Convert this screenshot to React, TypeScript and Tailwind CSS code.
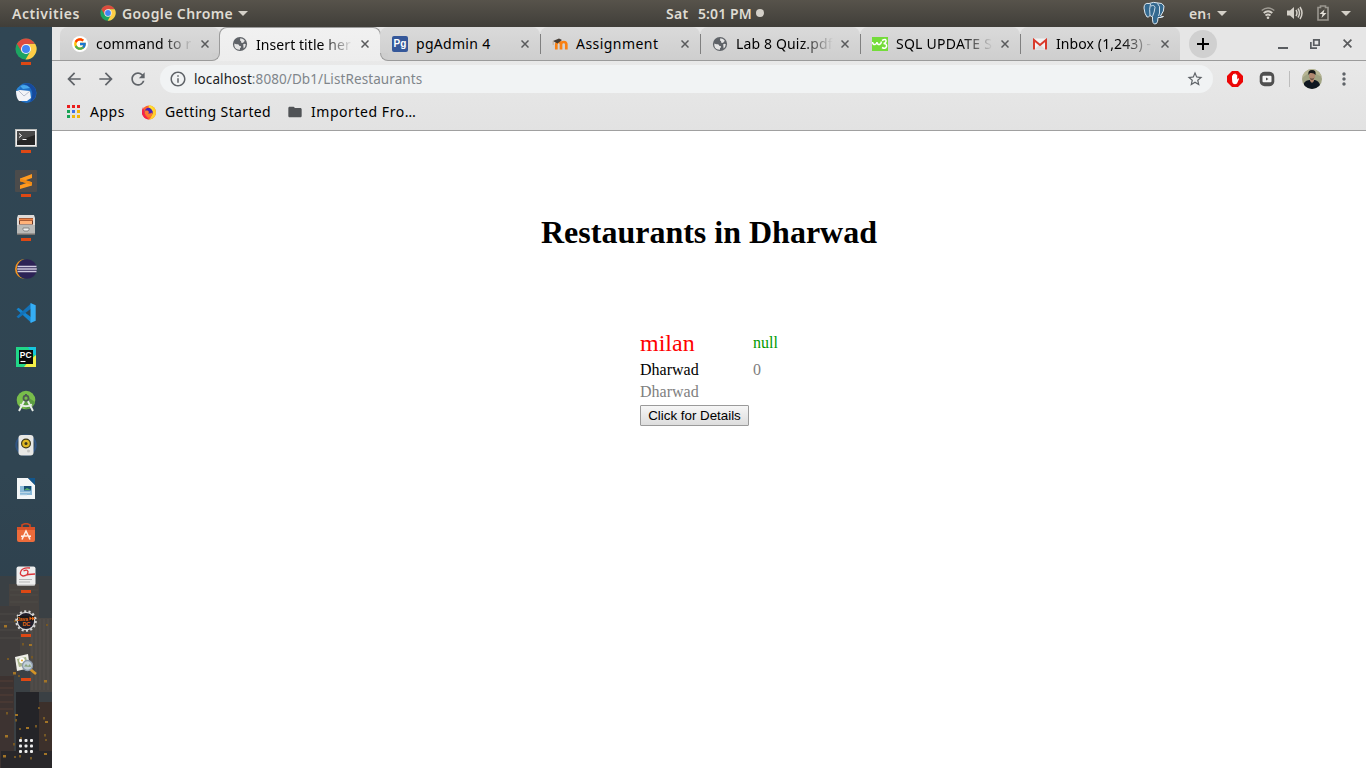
import React from "react";
import {
  MdArrowBack,
  MdArrowForward,
  MdRefresh,
  MdStarBorder,
  MdMoreVert,
  MdFolder,
  MdInfoOutline,
} from "react-icons/md";
import { FcGoogle } from "react-icons/fc";

type IconProps = { className?: string };

function ChromeIcon({ className }: IconProps) {
  return (
    <svg viewBox="0 0 48 48" className={className}>
      <circle cx="24" cy="24" r="23" fill="#1da462" />
      <path d="M24 24 L4.1 12.5 A23 23 0 0 1 43.9 12.5 L24 13 Z" fill="#dd4b3e" />
      <path d="M24 13 H44.2 A23 23 0 0 1 23 47 L33.5 29.5 Z" fill="#ffcd46" />
      <path d="M4.1 12.5 L14.4 30 L24 24 L24 13 Z" fill="#dd4b3e" />
      <circle cx="24" cy="24" r="11" fill="#f4f4f4" />
      <circle cx="24" cy="24" r="8.7" fill="#4285f4" />
    </svg>
  );
}

function GlobeIcon() {
  return (
    <svg viewBox="0 0 16 16" className="size-4">
      <circle cx="8" cy="8" r="7.1" fill="#5f6368" />
      <path d="M2.300 7.600Q4 8.600 5.800 8.200Q7.300 8.400 7.200 9.800L9 10.200Q9.200 11.600 8 12.200V13.800Q3 13.800 2.300 9.500Z" fill="#e4e4e4" />
      <path d="M8.300 2.300Q11.500 2.300 13 5Q11.800 5.300 11.500 6.500Q10 7.500 9 6.300Q9.800 5 8 4.600Z" fill="#e4e4e4" />
      <path d="M11.200 8.300Q12.600 7.400 13.800 8.200Q13.600 11 11.600 12.500Z" fill="#e4e4e4" />
    </svg>
  );
}

function ElephantIcon() {
  return (
    <svg viewBox="0 0 22 24" className="h-6 w-[22px]" stroke="#dfe9f0" strokeWidth="1" strokeLinejoin="round">
      <path d="M6 2.500Q1 1.500 1 7Q1.500 13 4 16Q5.500 16.500 7 14.500L9.500 16Q9.300 19 10 21.500Q11 24 13.500 22.500Q15 21 15 16.500Q19 17 20.500 15.500Q18.500 15.800 17.500 15Q21.500 10 21 5Q19.500 1.500 15 2Q10.500 .5 6 2.500Z" fill="#34698f" />
      <path d="M7.500 3Q6 8 7 14.500M14.500 2.500Q17.500 5.500 16.500 9Q17 12 15.500 15M8 5Q11.500 3.500 12 6.500Q11.500 11 9.500 15.500" fill="none" strokeWidth=".9" />
    </svg>
  );
}

function ThunderbirdIcon() {
  return (
    <svg viewBox="0 0 22 22" className="size-[22px]">
      <circle cx="11.5" cy="11" r="10" fill="#1f6fc4" />
      <path d="M8 2 Q18 -1 21 9 Q22 17 15 20 Q19 13 16 7 Q13 3 8 2Z" fill="#174a9c" />
      <path d="M5 4 Q11 1 15 6 L8 7Z" fill="#48a7ea" />
      <path d="M1 9 L5 8 L15 9 L16 16 L12 19 L4 19 Q1 16 1 9Z" fill="#f3f3f7" />
      <path d="M4 9 L9 14 L15 9" fill="none" stroke="#b8bdcc" />
      <path d="M1 9 Q2 5 6 4 L4 8Z" fill="#2b86d6" />
    </svg>
  );
}

function TerminalIcon() {
  return (
    <svg viewBox="0 0 22 18" className="mt-0.5 w-[22px] h-[18px]">
      <rect width="22" height="18" fill="#b9bbb9" />
      <rect x="1" y="1" width="20" height="16" fill="#eee" />
      <rect x="2" y="2" width="18" height="14" fill="#252525" />
      <path d="M2 2H20V6L2 12Z" fill="#484848" />
      <path d="M4 4.500L6.500 6.500L4 8.500M7.500 10.500H11.500" stroke="#fff" fill="none" />
    </svg>
  );
}

function SublimeIcon() {
  return (
    <svg viewBox="0 0 22 22" className="size-[22px]">
      <rect width="22" height="22" rx="1" fill="#4b4b4b" />
      <path d="M5 8.500L17 4V8L10.500 10.300L17 12.200V15.500L5 19V15.200L11.500 13L5 11.200Z" fill="#ff9a1f" />
      <path d="M5 8.500L5 11.200L17 15V12.200Z" fill="#f08a14" />
    </svg>
  );
}

function FilesIcon() {
  return (
    <svg viewBox="0 0 18 20" className="w-[18px] h-5">
      <path d="M1 0H17L18 3V19H0V3Z" fill="#dedbd8" />
      <rect x="2" y="3" width="14" height="6.500" fill="#6b3927" />
      <rect x="2" y="3.500" width="14" height="2" fill="#ea8044" />
      <rect x="3" y="6" width="12" height="3" fill="#ffb27a" />
      <rect x="0" y="10" width="18" height="9" fill="#b9b9b7" />
      <path d="M6 13H12V14.500L11 16H7L6 14.500Z" fill="#eee" stroke="#777" strokeWidth=".8" />
      <rect x="0" y="18.500" width="18" height="1.500" fill="#74716e" />
    </svg>
  );
}

function EclipseIcon() {
  return (
    <svg viewBox="0 0 22 20" className="w-[22px] h-5">
      <circle cx="10" cy="10" r="10" fill="#f7941e" />
      <circle cx="12" cy="10" r="10.300" fill="#304552" />
      <circle cx="12" cy="10" r="9.800" fill="#2c2255" />
      <path d="M2.500 7.500H21.500M2.200 10H21.800M2.500 12.500H21.500" stroke="#cfcbe0" strokeWidth="1.500" />
    </svg>
  );
}

function VsCodeIcon() {
  return (
    <svg viewBox="0 0 20 20" className="size-5">
      <path d="M0.500 6.200L2.500 4.800L15.500 14.600V20Z" fill="#1585cf" />
      <path d="M0.500 13.800L2.500 15.200L15.500 5.200V0Z" fill="#1372b8" />
      <path d="M14.500 0L19.700 2.300V17.700L14.500 20Z" fill="#35aef5" />
    </svg>
  );
}

function PyCharmIcon() {
  return (
    <svg viewBox="0 0 20 20" className="size-5">
      <rect width="20" height="20" fill="#21d789" />
      <path d="M12 0H20V9L15 5Z" fill="#16c6df" />
      <path d="M20 8V20H8L13 14Z" fill="#f5f047" />
      <rect x="3" y="3" width="14" height="14" fill="#0b0b0b" />
      <text x="3.800" y="10.800" fontSize="8.400" fontWeight="700" fill="#fff" fontFamily="Liberation Sans, sans-serif">
        PC
      </text>
      <path d="M4.500 14.500H9.500" stroke="#fff" strokeWidth="1.100" />
    </svg>
  );
}

function AndroidStudioIcon() {
  return (
    <svg viewBox="0 0 20 22" className="w-5 h-[22px]">
      <circle cx="10" cy="10" r="9.300" fill="#78bd4b" />
      <path d="M10 6L19 12Q16 19 10 19.300L6 14Z" fill="#5a9c42" />
      <path d="M9.200 9L3 21M10.800 9L17 21M4 14.500Q10 18 16 14.500" stroke="#e8eee8" strokeWidth="1.900" fill="none" />
      <path d="M10 4V7" stroke="#4d5b54" strokeWidth="2" />
      <circle cx="10" cy="8.200" r="2.500" fill="#78bd4b" stroke="#4d5b54" strokeWidth="1.800" />
    </svg>
  );
}

function RhythmboxIcon() {
  return (
    <svg viewBox="0 0 22 22" className="size-[22px]">
      <circle cx="11" cy="11" r="9.700" fill="none" stroke="#305482" strokeWidth="2" />
      <rect x="3.500" y="1" width="15" height="20.500" rx="3" fill="#e8e8e5" />
      <circle cx="11" cy="9.500" r="5" fill="#3e391c" />
      <circle cx="11" cy="9.500" r="3.800" fill="#dfb722" />
      <circle cx="11" cy="9.500" r="1.500" fill="#3b361e" />
      <circle cx="13.500" cy="17" r="1.500" fill="#c5c5c2" />
    </svg>
  );
}

function WriterIcon() {
  return (
    <svg viewBox="0 0 18 22" className="w-[18px] h-[22px]">
      <path d="M0 0H11L18 7V21H0Z" fill="#f3f6f7" />
      <path d="M11 0H18V7Z" fill="#12568c" />
      <rect x="3" y="8" width="12" height="9" fill="#8ab9d8" />
      <rect x="7" y="8" width="7" height="4.500" fill="#164d72" />
      <path d="M7 12L10 10L14 12Z" fill="#55ad67" />
      <path d="M3 14.500H13M3 17H10" stroke="#c8dce9" strokeWidth=".8" />
    </svg>
  );
}

function SoftwareIcon() {
  return (
    <svg viewBox="0 0 18 20" className="w-[18px] h-5">
      <path d="M5 5V2Q9 -.5 13 2V5" stroke="#c74721" strokeWidth="1.700" fill="none" />
      <path d="M0 4H18V17Q18 19 16 19H2Q0 19 0 17Z" fill="#ed6c3b" />
      <path d="M0 4H18V7H0Z" fill="#d85128" />
      <path d="M5 16.500L9 8L13 16.500M6.500 13H10.500" stroke="#fff0e6" strokeWidth="1.500" fill="none" />
      <circle cx="5" cy="13.300" r="1" fill="#fff" />
      <circle cx="13" cy="13.300" r="1" fill="#fff" />
    </svg>
  );
}

function DocumentViewerIcon() {
  return (
    <svg viewBox="0 0 20 20" className="-mt-0.5 size-5">
      <rect x=".5" y=".5" width="19" height="19" rx="2" fill="#eee" />
      <path d="M14 2Q7 1 5 5Q3 9 7 10Q12 10 12 5.500Q11 3 7.500 5M7 10Q12 8 19 8" stroke="#da3439" strokeWidth="1.300" fill="none" />
      <path d="M3 13.500H16M3 16H14" stroke="#b5b5b5" />
      <path d="M1 19H19" stroke="#c0c0c0" />
    </svg>
  );
}

function JavaEditorIcon() {
  return (
    <svg viewBox="0 0 22 22" className="size-[22px]">
      <circle cx="11" cy="11" r="8.700" fill="#201f2b" stroke="#d7d7d7" strokeWidth="1.200" />
      <circle cx="11" cy="11" r="9.800" fill="none" stroke="#d7d7d7" strokeWidth="2" strokeDasharray="2.100 2.300" />
      <rect x="3" y="6" width="16" height="5" fill="#191819" />
      <text x="2" y="10.500" fontSize="5" fontWeight="700" fill="#ea6a14" fontFamily="Liberation Sans, sans-serif">
        Java
      </text>
      <path d="M14.500 6.500L17 8.500L14.500 10.500ZM17 6.500L20 8.500L17 10.500Z" fill="#ea6a14" />
      <text x="7.400" y="16.300" fontSize="5.500" fontWeight="700" fill="#ea6a14" fontFamily="Liberation Sans, sans-serif">
        DC
      </text>
    </svg>
  );
}

function ImageViewerIcon() {
  return (
    <svg viewBox="0 0 22 22" className="size-[22px]">
      <path d="M0 3L13 0L15 14L2 17Z" fill="#eeeee7" />
      <path d="M2 5L11 3L13 11L4 13Z" fill="#a9b58a" />
      <circle cx="7" cy="6.500" r="2.800" fill="#fff" />
      <circle cx="7" cy="6.500" r="1.100" fill="#eab13a" />
      <path d="M15 15L21 20" stroke="#d59426" strokeWidth="2.600" />
      <circle cx="12.500" cy="11.500" r="5" fill="#c3d0d8" stroke="#8b98a8" strokeWidth="1.300" />
      <path d="M9 12.500L11 10L13 12L15 10L16 13Z" fill="#8aa37e" />
    </svg>
  );
}

function AppGridIcon() {
  return (
    <svg viewBox="0 0 14 14" className="size-3.5" fill="#eee">
      {[0, 5.5, 11].map((y) => [0, 5.5, 11].map((x) => <rect key={x + "-" + y} x={x} y={y} width="3" height="3" rx="1" />))}
    </svg>
  );
}

function Skyline() {
  const lights = [
    [4, 55], [14, 50], [22, 73], [29, 74], [31, 86], [7, 88], [13, 102], [18, 105], [6, 142], [15, 144],
    [15, 149], [19, 158], [5, 165], [20, 167], [13, 173], [26, 157], [35, 155], [38, 137], [44, 110],
    [46, 54], [43, 147], [45, 151], [44, 164], [45, 169], [3, 185], [14, 186], [19, 185], [44, 183], [30, 187],
  ];
  return (
    <svg viewBox="0 0 52 198" className="absolute bottom-0 left-0 w-[52px] h-[198px]">
      <rect width="52" height="192" y="6" fill="#3a4044" />
      <rect y="14" x="9" width="30" height="86" fill="#474340" />
      <rect y="36" width="20" height="70" fill="#403d3c" />
      <rect x="30" y="48" width="22" height="74" fill="#4b4845" />
      <path d="M32 49V120M36 49V120M40 49V120M44 49V120M48 49V120" stroke="#5b5752" strokeWidth=".7" />
      <path d="M10 20H38M10 25H38M10 32H38M0 44H20M0 52H20M0 60H20M0 68H20" stroke="#524e4a" strokeWidth=".8" />
      <rect y="106" width="14" height="92" fill="#3d3331" />
      <path d="M0 111H13M0 118H13M0 125H13M0 132H13M0 139H13" stroke="#553e37" />
      <rect x="16" y="122" width="23" height="76" fill="#242428" />
      <rect x="39" y="132" width="13" height="66" fill="#3c302b" />
      <rect x="1" y="181" width="51" height="17" fill="#29272a" />
      {lights.map(([x, y], i) => (
        <rect key={i} x={x} y={y} width={i % 3 === 0 ? 3 : 2} height={i % 2 === 0 ? 2.5 : 2} fill={i % 3 === 0 ? "#a27427" : "#765825"} />
      ))}
    </svg>
  );
}

const dockItems: { icon: React.ReactNode; running?: boolean }[] = [
  { icon: <ChromeIcon className="size-[22px]" />, running: true },
  { icon: <ThunderbirdIcon /> },
  { icon: <TerminalIcon />, running: true },
  { icon: <SublimeIcon />, running: true },
  { icon: <FilesIcon />, running: true },
  { icon: <EclipseIcon /> },
  { icon: <VsCodeIcon /> },
  { icon: <PyCharmIcon /> },
  { icon: <AndroidStudioIcon /> },
  { icon: <RhythmboxIcon /> },
  { icon: <WriterIcon /> },
  { icon: <SoftwareIcon /> },
  { icon: <DocumentViewerIcon />, running: true },
  { icon: <JavaEditorIcon />, running: true },
  { icon: <ImageViewerIcon />, running: true },
];

function Dock() {
  return (
    <nav className="relative flex w-[52px] shrink-0 flex-col items-center bg-[linear-gradient(#304654,#304552_60%,#2d3c48)] pb-[15px]">
      <Skyline />
      {dockItems.map((item, i) => (
        <div key={i} className="relative flex h-11 w-full items-center justify-center">
          {item.icon}
          {item.running && <span className="absolute bottom-1.5 left-[21px] h-[3px] w-2.5 bg-[#dd4814]" />}
        </div>
      ))}
      <div className="relative mt-auto">
        <AppGridIcon />
      </div>
    </nav>
  );
}

function Caret() {
  return (
    <svg viewBox="0 0 10 5" className="h-[5px] w-2.5" fill="#d4d0c8">
      <path d="M0 0H10L5 5Z" />
    </svg>
  );
}

function TopBar() {
  return (
    <header className="flex h-[27px] shrink-0 items-center bg-[linear-gradient(#57534b,#403e39)] pb-px font-['Noto_Sans','Open_Sans',sans-serif] text-[14px] font-semibold text-[#dfdbd2]">
      <div className="flex w-[640px] items-center pl-3">
        <span className="w-[88px] tracking-[0.55px]">Activities</span>
        <ChromeIcon className="size-4" />
        <span className="ml-1.5 w-[116px] tracking-[0.4px]">Google Chrome</span>
        <Caret />
      </div>
      <div className="flex items-center pl-[26px]">
        <span className="w-8 tracking-[0.3px]">Sat</span>
        <span className="w-[58px] whitespace-nowrap tracking-[0.1px]">5:01 PM</span>
        <span className="size-2 rounded-full bg-[#d4d0c8]" />
      </div>
      <div className="ml-auto flex items-center pr-[15px]">
        <ElephantIcon />
        <span className="ml-6 w-[28px]">
          en<span className="text-[9px]">1</span>
        </span>
        <Caret />
        <svg viewBox="0 0 14 12" className="ml-[34px] h-3 w-3.5" fill="none" stroke="#d4d0c8">
          <path d="M.7 3.500Q7 -1.500 13.300 3.500" opacity=".6" strokeWidth="1.500" />
          <path d="M2.700 6Q7 2.500 11.300 6" strokeWidth="1.900" />
          <path d="M4.500 8.500Q7 6.500 9.500 8.500" strokeWidth="1.700" />
          <circle cx="7" cy="10.700" r="1.300" fill="#d4d0c8" stroke="none" />
        </svg>
        <svg viewBox="0 0 16 14" className="ml-3 h-3.5 w-4" fill="none" stroke="#d4d0c8" strokeWidth="1.500">
          <path d="M0 4.500H3L7 1V13L3 9.500H0Z" fill="#d4d0c8" stroke="none" />
          <path d="M9 4Q11 7 9 10M11 2.500Q14 7 11 11.500M13 1Q17 7 13 13" />
        </svg>
        <svg viewBox="0 0 12 16" className="ml-3.5 h-4 w-3" fill="none">
          <path d="M1 2.500H3.500V1H8.500V2.500H11V15H1Z" stroke="#9a978f" strokeWidth="1.600" />
          <path d="M7.500 4.500L2.500 9H5.500L4.500 13L9.500 8H6.500Z" fill="#e4e0d8" />
        </svg>
        <span className="ml-[12px]">
          <Caret />
        </span>
      </div>
    </header>
  );
}

function CloseGlyph({ className }: IconProps) {
  return (
    <svg viewBox="0 0 8 8" className={className} stroke="#5a5b5d" strokeWidth="1.500">
      <path d="M.5 .5L7.500 7.500M7.500 .5L.5 7.500" />
    </svg>
  );
}

function GoogleFavicon() {
  return (
    <span className="flex size-4 items-center justify-center rounded-full bg-white">
      <FcGoogle className="size-3.5" />
    </span>
  );
}

function PgAdminFavicon() {
  return (
    <span className="flex size-4 items-center justify-center rounded-[2px] bg-[#35589a] font-['Liberation_Sans',sans-serif] text-[10px] leading-none font-bold text-white">
      Pg
    </span>
  );
}

function MoodleFavicon() {
  return (
    <svg viewBox="0 0 16 16" className="size-4">
      <path d="M4.300 13.500V8.500Q4.300 6 6.700 6Q9 6 9 8.500V13.500M9 8.500Q9 6 11.800 6Q14.300 6 14.300 8.500V13.500" fill="none" stroke="#f98012" strokeWidth="2.700" />
      <path d="M1 5L7 2.500L10 4L5.500 7.500Z" fill="#443c35" />
      <path d="M1.200 5V9" stroke="#b9a38b" strokeWidth=".8" />
    </svg>
  );
}

function W3Favicon() {
  return (
    <svg viewBox="0 0 16 14" className="h-3.5 w-4">
      <rect width="16" height="14" fill="#74dc3a" />
      <path d="M.5 5Q1 8 3 7.500Q5 7 5 5Q5.500 8 7.500 7.500Q9 7 9.500 4.500M10 3.500Q14.500 1 14 4.500Q13.500 6.500 11.500 6.500Q15 6.500 14.500 9.500Q13.500 12.500 10 10.500" fill="none" stroke="#fff" strokeWidth="1.500" />
    </svg>
  );
}

function GmailFavicon() {
  return (
    <svg viewBox="0 0 16 12" className="h-3 w-4">
      <rect x="1" y="0.500" width="14" height="11" fill="#f2f2f2" />
      <path d="M3 11L8 6L13 11Z" fill="#ddd" />
      <path d="M2 11.500V2L8 7L14 2V11.500" fill="none" stroke="#d93a2b" strokeWidth="2" />
    </svg>
  );
}

type Tab = { title: string; icon: React.ReactNode; active?: boolean; separator?: boolean; fades?: boolean; spacing: string };

const tabs: Tab[] = [
  { title: "command to r", icon: <GoogleFavicon />, fades: true, spacing: "tracking-[0.2px]" },
  { title: "Insert title her", icon: <GlobeIcon />, active: true, fades: true, spacing: "tracking-[0.07px]" },
  { title: "pgAdmin 4", icon: <PgAdminFavicon />, separator: true, spacing: "tracking-[0.3px]" },
  { title: "Assignment", icon: <MoodleFavicon />, separator: true, spacing: "tracking-[0.45px]" },
  { title: "Lab 8 Quiz.pdf", icon: <GlobeIcon />, separator: true, fades: true, spacing: "tracking-[0.15px]" },
  { title: "SQL UPDATE S", icon: <W3Favicon />, separator: true, fades: true, spacing: "tracking-[0.25px]" },
  { title: "Inbox (1,243) -", icon: <GmailFavicon />, fades: true, spacing: "tracking-[0.1px]" },
];

function TabItem({ tab, index }: { tab: Tab; index: number }) {
  const shape = tab.active
    ? "h-[34px] rounded-t-lg border border-b-0 border-[#9b9b9b] bg-[linear-gradient(#f1f1f1,#ededed)] -ml-px w-[162px] pb-px"
    : "h-[34px] rounded-t-lg border-b border-[#9b9b9b] bg-[linear-gradient(#dadada,#cecece)] w-40";
  return (
    <div className={"relative flex shrink-0 items-center pl-3 " + shape + (index === 2 ? " -ml-px" : "")}>
      <span className="flex size-4 items-center justify-center">{tab.icon}</span>
      <span
        className={
          "ml-2 w-[99px] whitespace-nowrap text-[14px] text-black " +
          (tab.fades ? "[mask-image:linear-gradient(90deg,#000_66%,transparent_98%)] " : "") +
          tab.spacing
        }
      >
        {tab.title}
      </span>
      <CloseGlyph className="ml-1.5 size-2" />
      {tab.separator && <span className="absolute top-[7px] right-[-1px] z-10 h-5 w-px bg-[#808080]" />}
      {index === 0 && (
        <span className="absolute right-0 -bottom-px z-10 size-2 bg-[#ededed]">
          <span className="block size-full rounded-br-lg border-r border-b border-[#9b9b9b] bg-[#cecece]" />
        </span>
      )}
      {index === 2 && (
        <span className="absolute -bottom-px left-0 z-10 size-2 bg-[#ededed]">
          <span className="block size-full rounded-bl-lg border-b border-l border-[#9b9b9b] bg-[#cecece]" />
        </span>
      )}
    </div>
  );
}

function TabStrip() {
  return (
    <div className="flex h-[34px] bg-[#e6e6e6]">
      <div className="w-2 border-b border-[#9b9b9b]" />
      {tabs.map((tab, i) => (
        <TabItem key={tab.title} tab={tab} index={i} />
      ))}
      <div className="flex flex-1 items-center border-b border-[#9b9b9b] pl-[9px] pr-[14px]">
        <span className="flex size-7 items-center justify-center rounded-full bg-[#d0d0d0]">
          <svg viewBox="0 0 12 12" className="size-3" stroke="#000" strokeWidth="2">
            <path d="M6 0V12M0 6H12" />
          </svg>
        </span>
        <span className="mt-2 ml-auto h-0.5 w-2.5 bg-[#5a5d61]" />
        <svg viewBox="0 0 10 10" className="ml-[22px] size-2.5" fill="none" stroke="#5a5d61" strokeWidth="1.700">
          <path d="M3.750 .85H9.150V6.250H3.750ZM.85 3V9.150H7" />
        </svg>
        <CloseGlyph className="ml-[23px] size-[9px]" />
      </div>
    </div>
  );
}

function Toolbar() {
  return (
    <div className="flex h-9 items-center pl-3 text-[#5f6368]">
      <MdArrowBack className="size-5" />
      <MdArrowForward className="ml-3 size-5" />
      <MdRefresh className="ml-3 size-5" />
      <div className="ml-3 flex h-7 w-[1053px] items-center rounded-full bg-[#f1f3f4] pl-[9px] pr-[9px]">
        <MdInfoOutline className="size-[18px]" />
        <span className="ml-[7px] font-['Noto_Sans','Open_Sans',sans-serif] text-[13.5px] tracking-[0.09px] whitespace-nowrap text-[#80868b]">
          <span className="text-[#202124]">localhost</span>:8080/Db1/ListRestaurants
        </span>
        <MdStarBorder className="ml-auto size-[18px]" />
      </div>
      <svg viewBox="0 0 16 16" className="ml-3.5 size-4">
        <path d="M5 0H11L16 5V11L11 16H5L0 11V5Z" fill="#ec0606" />
        <path d="M5 8V4.500Q5.500 4 6 4.500V7V3.300Q6.700 2.500 7.400 3.300V7V2.800Q8.100 2 8.800 2.800V7V3.800Q9.500 3 10.200 3.800V8.500L11 7.500Q12 7 12 8L10 12.500Q8 14 6 12.500Q5 11.500 5 8Z" fill="#fff" />
      </svg>
      <svg viewBox="0 0 16 16" className="ml-4 size-4">
        <rect x=".7" y=".8" width="14.600" height="14.400" rx="5" fill="#505050" />
        <rect x="3.500" y="4.700" width="9" height="6.600" rx="1" fill="#f5f5f5" />
        <path d="M7 6.500V9.500L9.500 8Z" fill="#505050" />
      </svg>
      <span className="ml-3.5 h-4 w-px bg-[#bdbdbd]" />
      <svg viewBox="0 0 20 20" className="ml-3 size-5 overflow-hidden rounded-full">
        <rect width="20" height="20" fill="#a0a383" />
        <path d="M0 0H20V8L14 5L8 3L0 9Z" fill="#b7b694" />
        <path d="M2 20V14Q4 11 8 11H13Q17 12 18 16V20Z" fill="#101821" />
        <path d="M8 9H12V12L10 14L8 12Z" fill="#b1836a" />
        <ellipse cx="10" cy="6.500" rx="3" ry="4" fill="#b18870" />
        <path d="M6.500 6Q5.500 1 10 1Q14.500 1 13.500 6Q12 3.500 8 4Z" fill="#17191a" />
        <path d="M7.500 8.500Q10 10.500 12.500 8.500L11 11H9Z" fill="#6b5346" />
      </svg>
      <MdMoreVert className="ml-3 size-5" />
    </div>
  );
}

function FirefoxIcon() {
  return (
    <svg viewBox="0 0 16 16" className="size-4">
      <circle cx="8" cy="8.500" r="7" fill="#ff632a" />
      <path d="M8 1Q15 2 15 9Q14 15 8 15.500Q12 12 11 6Z" fill="#ffd02d" />
      <path d="M2 3Q.5 6 1 10Q3 15 8 15.500L4 11Z" fill="#f5204d" />
      <circle cx="7.800" cy="8" r="4.200" fill="#4b22b5" />
      <path d="M4 6.500L6.500 6.500Q9 8 7 9.500Q10 10 11.500 8Q12 13.500 7 13Q3 11 4 6.500Z" fill="#ff7a2d" />
      <path d="M8 1Q13 3 12 8Q10.500 4 7.500 3.500Z" fill="#ffdf31" />
    </svg>
  );
}

function AppsIcon() {
  const colors = ["#ea1c1c", "#ea1c1c", "#ea1c1c", "#18a455", "#3f70e8", "#f0b60d", "#18a455", "#f0b60d", "#f0b60d"];
  return (
    <svg viewBox="0 0 13 13" className="size-[13px]">
      {colors.map((c, i) => (
        <rect key={i} x={(i % 3) * 5} y={Math.floor(i / 3) * 5} width="3" height="3" fill={c} />
      ))}
    </svg>
  );
}

function Bookmarks() {
  return (
    <div className="flex h-[34px] items-center border-b border-[#a0a0a0] pb-1 pl-[15px] text-[14px] whitespace-nowrap text-black">
      <AppsIcon />
      <span className="ml-2.5 w-[51px] tracking-[0.5px]">Apps</span>
      <FirefoxIcon />
      <span className="ml-2 w-[122px] tracking-[0.36px]">Getting Started</span>
      <MdFolder className="size-4 text-[#505356]" />
      <span className="ml-2 tracking-[0.55px]">Imported Fro…</span>
    </div>
  );
}

function RestaurantPage() {
  return (
    <main className="flex flex-1 flex-col bg-white font-['Liberation_Serif',serif] text-[16px] text-black">
      <h1 className="mt-[83px] text-center text-[32px] leading-[37px] font-bold">Restaurants in Dharwad</h1>
      <div className="mt-[79px] ml-[588px] grid w-[200px] grid-cols-[113px_1fr]">
        <span className="h-[29px] text-[24px] leading-[27px] text-[#ff0000]">milan</span>
        <span className="h-[29px] leading-[25px] text-[#009900]">null</span>
        <span className="leading-[22px]">Dharwad</span>
        <span className="leading-[22px] text-[#808080]">0</span>
        <span className="col-span-2 leading-[22px] text-[#808080]">Dharwad</span>
        <button className="mt-0.5 h-[21px] w-[109px] rounded-[1px] border border-[#9a9a9a] bg-[linear-gradient(#f6f6f6,#dddddd)] font-['Liberation_Sans',sans-serif] text-[13.333px] leading-none whitespace-nowrap">
          Click for Details
        </button>
      </div>
    </main>
  );
}

export default function App() {
  return (
    <div className="flex h-[768px] w-[1366px] flex-col overflow-hidden">
      <TopBar />
      <div className="flex min-h-0 flex-1">
        <Dock />
        <div className="flex min-w-0 flex-1 flex-col">
          <div className="bg-[linear-gradient(#ececec,#e2e2e2)] font-['Noto_Sans','Open_Sans',sans-serif]">
            <TabStrip />
            <Toolbar />
            <Bookmarks />
          </div>
          <RestaurantPage />
        </div>
      </div>
    </div>
  );
}
